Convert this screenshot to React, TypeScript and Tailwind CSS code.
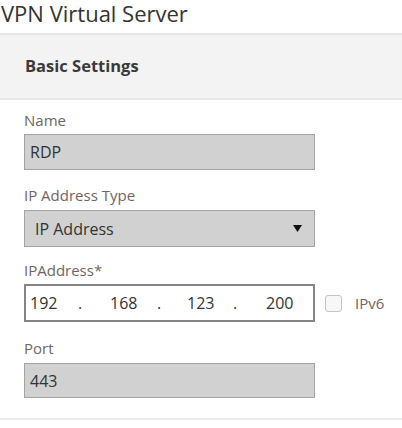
import React from 'react';

function Label({ children }: { children: React.ReactNode }) {
  return <div className="h-5 text-[15px] leading-5 text-[#6f6560]">{children}</div>;
}

export default function App() {
  return (
    <div className="w-[402px] h-[428px] bg-white overflow-hidden font-['Open_Sans',sans-serif] text-[#333]">
      <div className="h-[33px] pl-[1px] text-[22px] leading-[26px] text-[#333]">VPN Virtual Server</div>

      <div className="h-[67px] border-y-2 border-[#e6e6e6] bg-[#f3f3f3] flex items-center pl-[25px]">
        <span className="text-[16.5px] font-bold text-[#3a3a3a]">Basic Settings</span>
      </div>

      <div className="pl-[24px] pt-[10px]">
        <Label>Name</Label>
        <div className="mt-1 w-[291px] h-[36px] border border-[#a3a3a3] bg-[#d1d1d1] flex items-center pl-[5px] text-[16px]">
          RDP
        </div>

        <div className="mt-[15px]">
          <Label>IP Address Type</Label>
        </div>
        <div className="mt-[5px] w-[291px] h-[37px] border border-[#a3a3a3] bg-[#d1d1d1] flex items-center justify-between pl-[10px] pr-[12px] text-[16px]">
          <span>IP Address</span>
          <svg width="9" height="7" viewBox="0 0 9 7">
            <path d="M0 0 H9 L4.5 7 Z" fill="#111" />
          </svg>
        </div>

        <div className="mt-[13px]">
          <Label>IPAddress*</Label>
        </div>
        <div className="mt-1 flex items-center">
          <div className="w-[291px] h-[38px] border-2 border-[#858585] bg-white flex items-center pl-[4px] text-[16px]">
            <span className="w-[48px]">192</span>
            <span className="w-[32px]">.</span>
            <span className="w-[47px]">168</span>
            <span className="w-[30px]">.</span>
            <span className="w-[46px]">123</span>
            <span className="w-[33px]">.</span>
            <span>200</span>
          </div>
          <div className="ml-[10px] w-[17px] h-[17px] rounded-[3px] border border-[#c4c4c4] bg-[#f7f7f7]" />
          <span className="ml-[13px] text-[15px] text-[#6f6560]">IPv6</span>
        </div>

        <div className="mt-[16px]">
          <Label>Port</Label>
        </div>
        <div className="mt-[5px] w-[291px] h-[35px] border border-[#a3a3a3] bg-[#d1d1d1] flex items-center pl-[5px] text-[16px]">
          443
        </div>
      </div>

      <div className="mt-[20px] border-t-2 border-[#ececec]" />
    </div>
  );
}
